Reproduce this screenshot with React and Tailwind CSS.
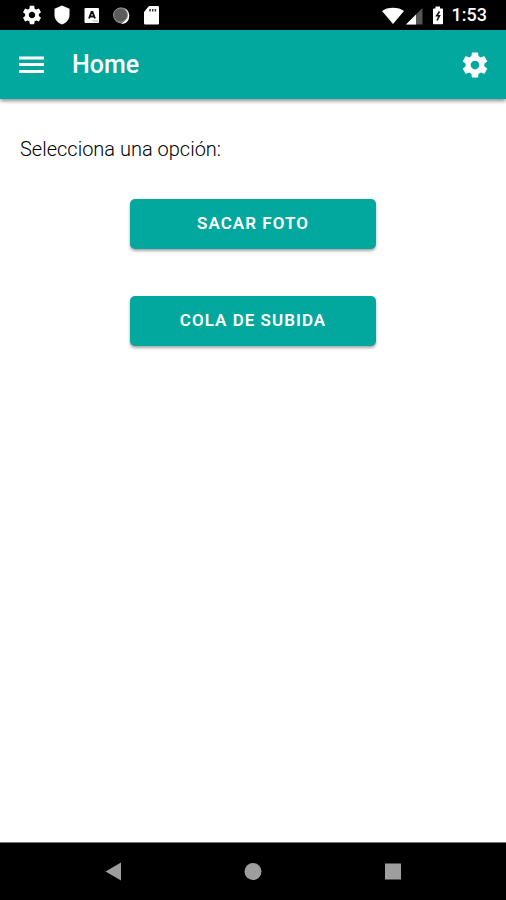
import React from "react";

const GEAR =
  "M19.43 12.98c.04-.32.07-.64.07-.98s-.03-.66-.07-.98l2.11-1.65c.19-.15.24-.42.12-.64l-2-3.46c-.12-.22-.39-.3-.61-.22l-2.49 1c-.52-.4-1.08-.73-1.69-.98l-.38-2.65C14.46 2.18 14.25 2 14 2h-4c-.25 0-.46.18-.49.42l-.38 2.65c-.61.25-1.17.59-1.69.98l-2.49-1c-.23-.09-.49 0-.61.22l-2 3.46c-.13.22-.07.49.12.64l2.11 1.65c-.04.32-.07.65-.07.98s.03.66.07.98l-2.11 1.65c-.19.15-.24.42-.12.64l2 3.46c.12.22.39.3.61.22l2.49-1c.52.4 1.08.73 1.69.98l.38 2.65c.03.24.24.42.49.42h4c.25 0 .46-.18.49-.42l.38-2.65c.61-.25 1.17-.59 1.69-.98l2.49 1c.23.09.49 0 .61-.22l2-3.46c.12-.22.07-.49-.12-.64l-2.11-1.65zM12 15.5c-1.93 0-3.500-1.570-3.500-3.500s1.570-3.500 3.500-3.500 3.500 1.570 3.500 3.500-1.570 3.500-3.500 3.500z";

function Gear({ className }) {
  return (
    <svg viewBox="0 0 24 24" className={className} fill="currentColor" aria-hidden="true">
      <path d={GEAR} />
    </svg>
  );
}

function StatusBar() {
  return (
    <div className="flex h-[30px] shrink-0 items-center justify-between bg-black pl-[21px] pr-[19px] text-white">
      <div className="flex items-center gap-2">
        <Gear className="size-[22px]" />
        <svg viewBox="0 0 22 22" className="size-[22px]" fill="#fff" aria-hidden="true">
          <path d="M11 1.5 18.5 4.7v6c0 4.6-3 8.2-7.5 9.8C6.5 18.9 3.5 15.3 3.5 10.7v-6z" />
        </svg>
        <svg viewBox="0 0 22 22" className="size-[22px]" aria-hidden="true">
          <rect x="3.5" y="4" width="14.5" height="15" rx="1" fill="#fff" />
          <path d="M8 14.500 10.500 8h1l2.500 6.500M9 12.500h4" fill="none" stroke="#111" strokeWidth="1.800" />
          <path d="M11.500 17h5.500" stroke="#aaa" strokeWidth="1" />
        </svg>
        <svg viewBox="0 0 22 22" className="size-[22px]" aria-hidden="true">
          <circle cx="10.500" cy="11.500" r="8" fill="#777" />
          <path d="M10 20c5.200.4 8.800-3.600 8-9.500-.6-3-2-5-4.500-6.200 4.600 4.200 3 12.200-3.500 15.700z" fill="#fff" />
          <circle cx="9.500" cy="11" r="7" fill="#5c5c5c" stroke="#8d8d8d" strokeWidth="1" />
        </svg>
        <svg viewBox="0 0 22 22" className="size-[22px]" aria-hidden="true">
          <path d="M8 2h8.500c1 0 1.500.6 1.500 1.500v15.500c0 1-.5 1.500-1.500 1.500h-12c-1 0-1.500-.5-1.500-1.500V8z" fill="#fff" />
          <path d="M9 5v2.500M11.700 5v2.500M14.400 5v2.500" stroke="#333" strokeWidth="1.500" />
        </svg>
      </div>
      <div className="flex items-center">
        <svg viewBox="0 0 22 22" className="size-[22px]" fill="#fff" aria-hidden="true">
          <path d="M11 20 0 7C5 2.500 17 2.500 22 7z" />
        </svg>
        <svg viewBox="0 0 22 22" className="size-[22px]" aria-hidden="true">
          <path d="M2 20.500 18.500 4v16.500z" fill="#555" />
          <path d="M2 20.500 12 10.500v10z" fill="#fff" />
        </svg>
        <svg viewBox="0 0 22 22" className="size-[22px]" aria-hidden="true">
          <path d="M9.500 2.500h4.500v2h2c.6 0 1 .4 1 1v13.700c0 .6-.4 1-1 1H8c-.6 0-1-.4-1-1V5.500c0-.6.4-1 1-1h1.500z" fill="#fff" />
          <path d="M13.500 7.500 10.700 11.700h2.800L11 16.500" fill="none" stroke="#111" strokeWidth="1.600" />
        </svg>
        <span className="ml-1 text-lg leading-[30px] font-medium">1:53</span>
      </div>
    </div>
  );
}

function Header() {
  return (
    <header className="flex h-[69px] shrink-0 items-center bg-[#02a89e] px-4 text-white shadow-[0_2px_4px_rgba(0,0,0,0.45)]">
      <button type="button" aria-label="Menu" className="size-[30px]">
        <svg viewBox="0 0 30 30" className="size-[30px]" aria-hidden="true">
          <path d="M3 8h25M3 14.500h25M3 21.500h25" stroke="#fff" strokeWidth="3" />
        </svg>
      </button>
      <h1 className="ml-[26px] flex-1 text-[25px] font-medium">Home</h1>
      <button type="button" aria-label="Ajustes" className="size-[30px]">
        <Gear className="size-[30px]" />
      </button>
    </header>
  );
}

function ActionButton({ children }) {
  return (
    <button
      type="button"
      className="h-[50px] w-[246px] rounded-[5px] bg-[#02a89e] text-[17px] font-semibold tracking-[0.06em] text-white uppercase shadow-[0_2px_3px_rgba(0,0,0,0.35)]"
    >
      {children}
    </button>
  );
}

function NavBar() {
  return (
    <nav className="grid h-[58px] shrink-0 grid-cols-[140px_140px_140px] items-center justify-center justify-items-center border-t border-[#777] bg-black">
      <button type="button" aria-label="Atrás">
        <svg viewBox="0 0 20 20" className="block size-5" aria-hidden="true">
          <path d="M2.500 9.500 18 .5v18z" fill="#9e9e9e" />
        </svg>
      </button>
      <button type="button" aria-label="Inicio">
        <svg viewBox="0 0 20 20" className="block size-5" aria-hidden="true">
          <circle cx="10" cy="9.500" r="8.500" fill="#9e9e9e" />
        </svg>
      </button>
      <button type="button" aria-label="Recientes">
        <svg viewBox="0 0 20 20" className="block size-5" aria-hidden="true">
          <rect x="2" y="1.500" width="16" height="16" fill="#9e9e9e" />
        </svg>
      </button>
    </nav>
  );
}

export default function App() {
  return (
    <div className="flex min-h-screen flex-col bg-white font-[Roboto,sans-serif]">
      <StatusBar />
      <Header />
      <main className="flex-1 px-5 pt-9">
        <p className="text-xl font-light text-black">Selecciona una opción:</p>
        <div className="mt-9 flex flex-col items-center gap-[47px]">
          <ActionButton>Sacar foto</ActionButton>
          <ActionButton>Cola de subida</ActionButton>
        </div>
      </main>
      <NavBar />
    </div>
  );
}
